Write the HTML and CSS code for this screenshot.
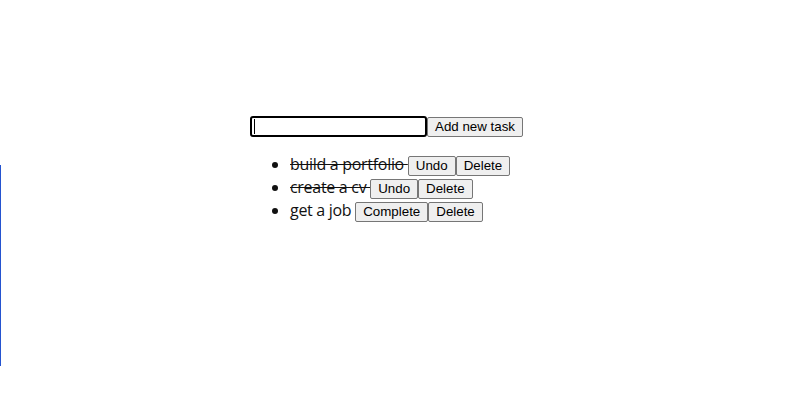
FILE: index.html
```html
<!DOCTYPE html>
<html>
<head>
<meta charset="utf-8">
<link rel="stylesheet" href="styles.css">
</head>
<body>
<div class="edge"></div>
<main class="app">
  <div class="form"><input class="task-input" type="text"><button class="btn">Add new task</button></div>
  <ul class="tasks">
    <li><span class="done">build a portfolio </span><button class="btn">Undo</button><button class="btn">Delete</button></li>
    <li><span class="done">create a cv </span><button class="btn">Undo</button><button class="btn">Delete</button></li>
    <li><span>get a job </span><button class="btn">Complete</button><button class="btn">Delete</button></li>
  </ul>
</main>
</body>
</html>
```
FILE: styles.css
```css
html, body {
  margin: 0;
  background: #fff;
}
body {
  font-family: "Open Sans", "Noto Sans", sans-serif;
  font-size: 16px;
  letter-spacing: -0.3px;
  color: #111;
}
.edge {
  position: fixed;
  left: 0;
  top: 165px;
  width: 1px;
  height: 201px;
  background: #2454d0;
}
.app {
  padding: 116px 0 0 250px;
}
.form {
  position: relative;
  display: flex;
  align-items: center;
  height: 21px;
}
.form::before {
  content: "";
  position: absolute;
  left: 4px;
  top: 3px;
  width: 1px;
  height: 15px;
  background: #000;
}
.task-input {
  box-sizing: border-box;
  width: 177px;
  height: 21px;
  margin: 0;
  border: 2px solid #000;
  border-radius: 3px;
  outline: none;
  padding: 1px 2px;
  font: 13.33px "Liberation Sans", Arial, sans-serif;
}
.btn {
  box-sizing: border-box;
  height: 20px;
  margin: 0;
  padding: 1px 7px;
  border: 1px solid #767676;
  border-radius: 2px;
  background: #efefef;
  color: #000;
  letter-spacing: 0;
  font: 13.33px "Liberation Sans", Arial, sans-serif;
  vertical-align: middle;
}
.tasks {
  margin: 16px 0 0;
  padding-left: 40px;
}
.tasks li {
  height: 23px;
  line-height: 23px;
}
.done {
  text-decoration: line-through;
}
```
